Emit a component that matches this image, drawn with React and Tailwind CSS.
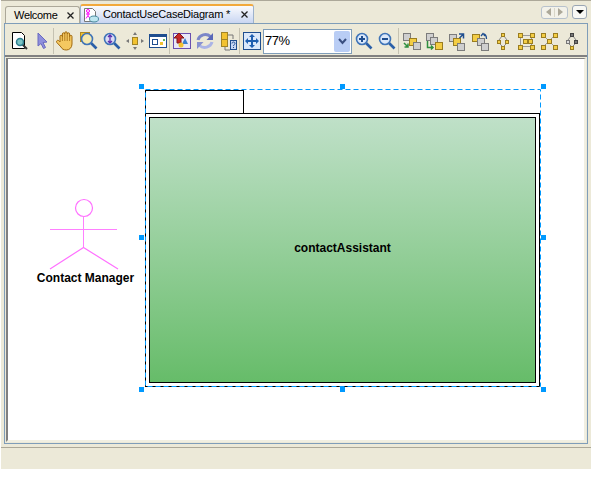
import React from "react";

const Sep = () => <div className="w-px h-[26px] bg-[#c5c2b2] shrink-0" />;

const Ico = ({ children }) => (
  <div className="w-[23px] h-[24px] flex items-center justify-center shrink-0">
    <svg width="20" height="20" viewBox="0 0 20 20">{children}</svg>
  </div>
);

const Sq = ({ x, y, s = 7, fill = "#f3cd45", stroke = "#9a7d20" }) => (
  <rect x={x + 0.5} y={y + 0.5} width={s} height={s} fill={fill} stroke={stroke} />
);
const Gr = (p) => <Sq fill="#cfcfcf" stroke="#7c7c7c" {...p} />;

const Lens = ({ fill = "#fff", cx = 8, cy = 8, r = 5.5 }) => (
  <>
    <line x1={cx + 4} y1={cy + 4} x2={cx + 9.5} y2={cy + 9.5} stroke="#2a5fa8" strokeWidth="2.6" />
    <circle cx={cx} cy={cy} r={r} fill={fill} stroke="#3f74b8" strokeWidth="1.6" />
  </>
);

const Close = () => (
  <svg width="7" height="7" viewBox="0 0 7 7" className="shrink-0">
    <path d="M0.5 0.5l6 6M6.5 0.5l-6 6" stroke="#222" strokeWidth="1.3" fill="none" />
  </svg>
);

const Handle = ({ className }) => (
  <div className={`absolute w-[5px] h-[5px] bg-[#0099ff] ${className}`} />
);

const App = () => {
  return (
    <div className="w-[600px] h-[480px] bg-white overflow-hidden" style={{ fontFamily: '"Liberation Sans", sans-serif' }}>
      <div className="ml-px w-[590px] h-[469px] bg-[#ece9d8] flex flex-col">
        <div className="h-px bg-[#aca899]" />
        {/* tabs */}
        <div className="h-[22px] flex items-end pl-[4px] relative">
          <div className="w-[75px] h-[17px] bg-[#f1efe2] border border-b-0 border-[#aca899] rounded-t-[3px] flex items-center pl-[8px] pr-[5px] text-[11px] tracking-[-0.3px] text-black">
            <span className="flex-1">Welcome</span>
            <Close />
          </div>
          <div className="w-[174px] h-[19px] bg-gradient-to-b from-[#fbfbfd] to-[#c9d6f2] border border-b-0 border-[#9db2cc] border-t-2 border-t-[#f2a93c] rounded-t-[3px] flex items-center pl-[2px] pr-[5px] text-[11px] tracking-[-0.22px] text-black">
            <svg width="16" height="16" viewBox="0 0 16 16" className="shrink-0 mr-[4px]">
              <path d="M1.5 1.5h8l3 3v10h-11z" fill="#fff" stroke="#777" />
              <circle cx="5" cy="4" r="1.5" fill="none" stroke="#f0f" />
              <path d="M5 5.5v3M3 7h4M5 8.5l-2 3M5 8.5l2 3" stroke="#f0f" fill="none" />
              <ellipse cx="11" cy="12" rx="4.5" ry="3" fill="#bde6f0" stroke="#4a8aa0" />
            </svg>
            <span className="flex-1 whitespace-nowrap">ContactUseCaseDiagram *</span>
            <Close />
          </div>
          <div className="flex-1" />
          <div className="flex items-center gap-[4px] mb-[4px] mr-[4px]">
            <div className="w-[27px] h-[13px] rounded-[3px] border border-[#b8c2cc] bg-[#f3f2ea] flex items-center justify-around px-[3px]">
              <div className="w-0 h-0 border-y-[4px] border-y-transparent border-r-[5px] border-r-[#aca899]" />
              <div className="w-px h-[9px] bg-[#d8d6c8]" />
              <div className="w-0 h-0 border-y-[4px] border-y-transparent border-l-[5px] border-l-[#aca899]" />
            </div>
            <div className="w-[15px] h-[14px] rounded-[3px] border border-[#9aa6b4] bg-[#f8f8f4] flex items-center justify-center">
              <div className="w-0 h-0 border-x-[4px] border-x-transparent border-t-[4px] border-t-black" />
            </div>
          </div>
        </div>

        {/* editor */}
        <div className="mx-[3px] w-[584px] h-[421px] border border-[#7f9db9] flex flex-col">
          <div className="h-[33px] border-b-2 border-b-[#808080] flex items-center pl-[2px] pt-[3px]">
            <Ico>
              <path d="M3.5 1.5h9l3 3v13h-12z" fill="#fff" stroke="#000" />
              <line x1="13" y1="13" x2="18" y2="18" stroke="#333" strokeWidth="2" />
              <circle cx="11" cy="11" r="3.5" fill="#7cc4c4" stroke="#2f7f8f" strokeWidth="1.5" />
            </Ico>
            <Ico>
              <path d="M6 2l9 9-4 .5 2.5 5-2 1-2.5-5L6 15z" fill="#8f8fdc" stroke="#6a6ac0" />
            </Ico>
            <Sep />
            <Ico>
              <path d="M4 11V5.5a1.2 1.2 0 012.4 0V3a1.2 1.2 0 012.4 0V2a1.2 1.2 0 012.4 0v1a1.2 1.2 0 012.4 0v2.5a1.2 1.2 0 012.4 0V13c0 3.5-2.5 6-5.5 6s-4.5-1-5.5-3L.8 11.5c-.8-1.2.2-2.3 1.2-2.2 1 .1 2 1.7 2 1.7z" fill="#f5c860" stroke="#a06a10" />
              <path d="M6.4 5v5M8.8 3v7M11.2 3v7M13.6 5v5" stroke="#a06a10" strokeWidth="0.8" />
            </Ico>
            <Ico>
              <rect x="1.5" y="1.5" width="9" height="9" fill="#f2c230" stroke="#b08a20" />
              <Lens fill="#f5e9b0" />
            </Ico>
            <Ico>
              <Lens fill="#dcdcf5" />
              <path d="M8 4v8M6 6l2-2 2 2M6 10l2 2 2-2" stroke="#5a2fb0" strokeWidth="1.3" fill="none" />
            </Ico>
            <Ico>
              <rect x="7.5" y="6.5" width="5" height="7" fill="#f2c230" stroke="#a08428" />
              <path d="M10 1l2 3H8zM10 19l-2-3h4zM1 10l3-2v4zM19 10l-3 2V8z" fill="#777" />
            </Ico>
            <Ico>
              <rect x="1.5" y="3.5" width="17" height="13" fill="#fff" stroke="#1f4e8f" />
              <rect x="2" y="4" width="16" height="2" fill="#1f4e8f" />
              <rect x="4.5" y="8.5" width="5" height="5" fill="#fff" stroke="#1f4e8f" />
              <rect x="12" y="11" width="3" height="3" fill="#f2c230" />
              <rect x="15" y="8" width="2" height="2" fill="#5cb85c" />
            </Ico>
            <Sep />
            <Ico>
              <rect x="1.5" y="2.5" width="17" height="15" fill="#e8e8f8" stroke="#6a4fb0" />
              <path d="M7 2l5 5H9v5H5V7H2z" fill="#c82828" stroke="#801818" />
              <path d="M13 7l3 6h-6z" fill="#3a7fd0" />
              <circle cx="9" cy="14" r="2.5" fill="#f2c230" />
            </Ico>
            <Ico>
              <path d="M3 9a7.5 7 0 0112.5-3.5" fill="none" stroke="#7b86c8" strokeWidth="3" />
              <path d="M18 2v7h-6.5z" fill="#5a68b8" />
              <path d="M17 11a7.5 7 0 01-12.5 3.5" fill="none" stroke="#aab4e6" strokeWidth="3" />
              <path d="M2 18v-7h6.5z" fill="#8791d0" />
            </Ico>
            <Ico>
              <rect x="3.5" y="1.5" width="6" height="7" fill="#f2c230" stroke="#a08428" />
              <rect x="3.5" y="8.5" width="6" height="7" fill="#f2c230" stroke="#a08428" />
              <rect x="12.5" y="9.5" width="6" height="9" fill="#c8d8f5" stroke="#1f4e8f" />
              <path d="M10 4h5v4M7 16v3h5" stroke="#777" fill="none" />
              <path d="M14 12.5c0-2 3-2 3 0 0 1-1.500 1-1.500 2.500M15.500 16v1" stroke="#1f4e8f" fill="none" />
            </Ico>
            <Sep />
            <Ico>
              <rect x="1.5" y="1.5" width="17" height="17" fill="#dbe8fa" stroke="#1f4e8f" />
              <path d="M10 3l3 3h-2v3h3V7l3 3-3 3v-2h-3v3h2l-3 3-3-3h2v-3H6v2l-3-3 3-3v2h3V6H7z" fill="#1f5fb0" />
            </Ico>
            <div className="w-[89px] h-[25px] bg-white border border-[#7f9db9] flex items-center pl-[1px] text-[13px] text-black shrink-0">
              <span className="flex-1 tracking-[-0.5px]">77%</span>
              <div className="w-[16px] h-[21px] mr-px bg-[#b9cdf5] rounded-[2px] flex items-center justify-center">
                <svg width="9" height="7" viewBox="0 0 9 7"><path d="M1 1l3.5 4L8 1" fill="none" stroke="#3a4f80" strokeWidth="2" /></svg>
              </div>
            </div>
            <Ico>
              <Lens fill="#dbe8fa" />
              <path d="M5 8h6M8 5v6" stroke="#1f4e8f" strokeWidth="2" />
            </Ico>
            <Ico>
              <Lens fill="#dbe8fa" />
              <path d="M5 8h6" stroke="#1f4e8f" strokeWidth="2" />
            </Ico>
            <Sep />
            <Ico>
              <Gr x={2} y={2} /><Sq x={8} y={7} /><Gr x={12} y={11} />
              <path d="M3 12l4 4M7 12.500V16H3.500" stroke="#2f8f3f" strokeWidth="1.5" fill="none" />
            </Ico>
            <Ico>
              <Gr x={2} y={2} /><Gr x={6} y={6} /><Sq x={11} y={11} />
              <path d="M3.500 10v6.500H9M7 14.500l2 2-2 2" stroke="#2f8f3f" strokeWidth="1.5" fill="none" />
            </Ico>
            <Ico>
              <Gr x={2} y={3} /><Sq x={6} y={7} /><Gr x={10} y={12} />
              <path d="M12 3h4.500v4.500M16 3.500l-3.500 3.500" stroke="#1f4e8f" strokeWidth="1.5" fill="none" />
            </Ico>
            <Ico>
              <Sq x={2} y={3} /><Gr x={7} y={7} /><Gr x={11} y={12} />
              <path d="M11 5l2-2.500 2 2.500M13 3c2 0 3.500 1.500 3.500 5" stroke="#1f4e8f" strokeWidth="1.3" fill="none" />
            </Ico>
            <Ico>
              <path d="M9 5L6 9M11 5l3 4M6 12l3 3M14 12l-3 3" stroke="#888" fill="none" />
              <Sq x={8} y={2} s={3} /><Sq x={4} y={9} s={3} /><Sq x={12} y={9} s={3} /><Sq x={8} y={15} s={3} />
            </Ico>
            <Ico>
              <rect x="4.500" y="4.500" width="11" height="11" fill="none" stroke="#999" />
              <Sq x={2} y={2} s={4} /><Sq x={14} y={2} s={4} /><Sq x={2} y={14} s={4} /><Sq x={14} y={14} s={4} />
              <Sq x={7} y={8} s={4} /><Sq x={12} y={8} s={4} />
            </Ico>
            <Ico>
              <path d="M4 4l12 12M16 4L4 16" stroke="#999" />
              <Sq x={2} y={2} s={4} /><Sq x={14} y={2} s={4} /><Sq x={2} y={14} s={4} /><Sq x={14} y={14} s={4} /><Sq x={8} y={8} s={4} />
            </Ico>
            <Ico>
              <path d="M9 5L6 9M11 5l3 4M6 12l3 3M14 12l-3 3" stroke="#888" fill="none" />
              <Sq x={8} y={2} s={3} fill="#777" stroke="#444" /><Sq x={4} y={9} s={3} fill="#ddd" stroke="#777" /><Sq x={12} y={9} s={3} fill="#777" stroke="#444" /><Sq x={8} y={15} s={3} />
            </Ico>
          </div>

          {/* canvas frame */}
          <div className="flex-1 m-px border-l-2 border-l-[#808080] border-t border-t-[#808080] border-r-2 border-r-[#f1efe2] border-b-2 border-b-[#f1efe2] bg-white relative">
            {/* free canvas: the diagram's nodes are placed by coordinates */}
            <div className="absolute left-[-8px] top-[-59px] w-[590px] h-[469px] pointer-events-none">
              <div className="absolute left-[145px] top-[90px] w-[99px] h-[24px] bg-white border border-black border-b-0" />
              <div className="absolute left-[145px] top-[113px] w-[395px] h-[274px] bg-white border border-black p-[3px]">
                <div className="w-full h-full border border-black bg-gradient-to-b from-[#bfe0c8] to-[#66bc69] flex items-center justify-center">
                  <span className="text-[12px] font-bold text-black mt-[-5px]">contactAssistant</span>
                </div>
              </div>
              <svg className="absolute left-[144px] top-[88px]" width="398" height="300" viewBox="144 88 398 300">
                <rect x="145.5" y="89.5" width="395" height="297" fill="none" stroke="#0099ff" strokeDasharray="5 3" />
              </svg>
              <Handle className="left-[139px] top-[84px]" />
              <Handle className="left-[340px] top-[84px]" />
              <Handle className="left-[541px] top-[84px]" />
              <Handle className="left-[139px] top-[235px]" />
              <Handle className="left-[541px] top-[235px]" />
              <Handle className="left-[139px] top-[387px]" />
              <Handle className="left-[340px] top-[387px]" />
              <Handle className="left-[541px] top-[387px]" />
              <svg className="absolute left-[45px] top-[195px]" width="80" height="78" viewBox="45 195 80 78">
                <circle cx="84" cy="208" r="8.5" fill="none" stroke="#ff70ff" strokeWidth="1.2" />
                <path d="M83.5 216.5v31M50 229.5h67" fill="none" stroke="#ff80ff" />
                <path d="M83.5 247.5L50 269M83.5 247.5L118 269" fill="none" stroke="#ff70ff" strokeWidth="1.2" />
              </svg>
              <div className="absolute left-[20px] top-[269px] w-[131px] text-center text-[12px] font-bold text-black">Contact Manager</div>
            </div>
          </div>
        </div>

        <div className="mt-[3px] h-px bg-[#aca899]" />
        <div className="flex-1" />
      </div>
    </div>
  );
};

export default App;
